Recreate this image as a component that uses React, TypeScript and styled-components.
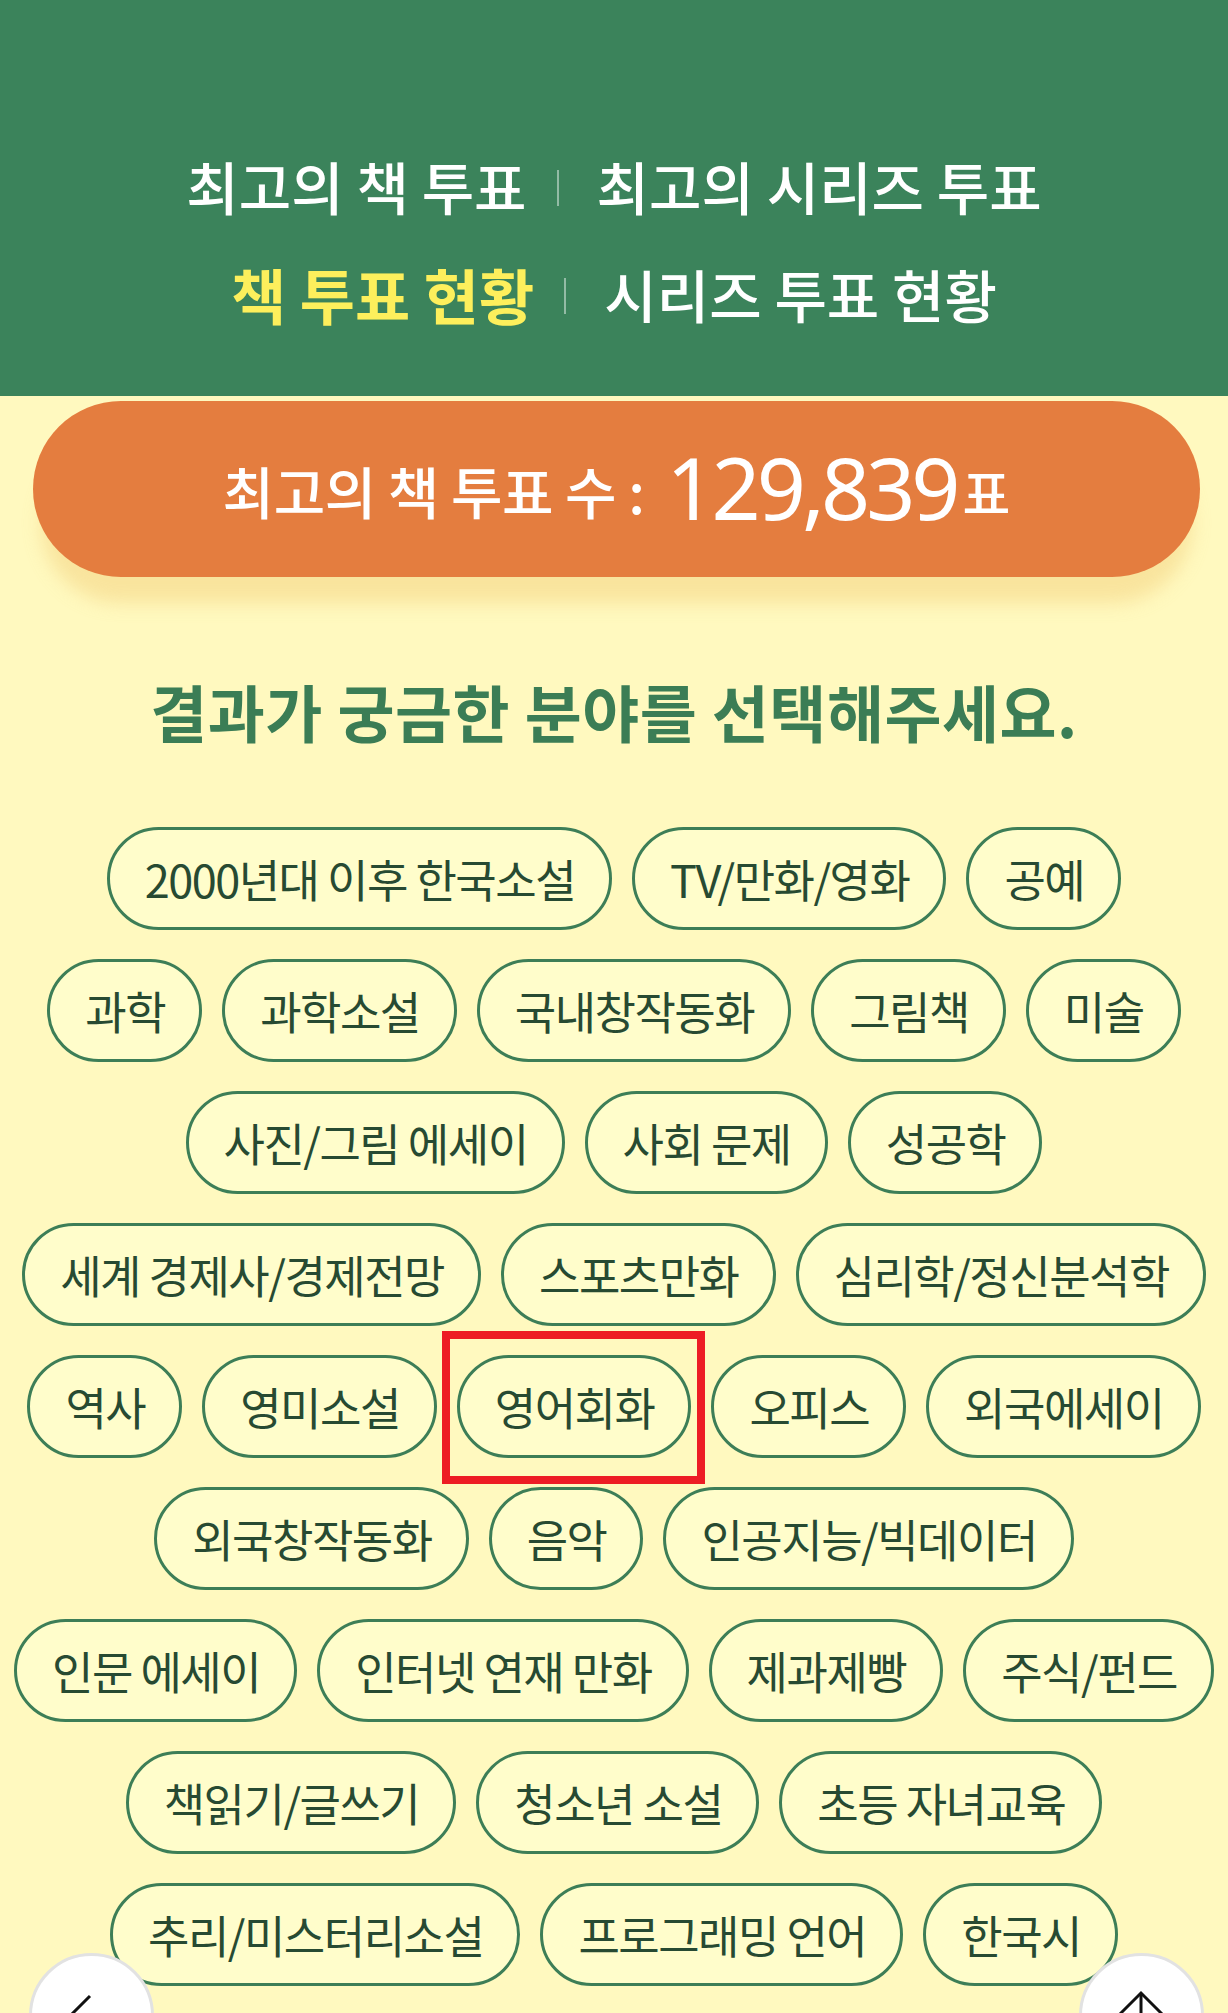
import React from "react";
import styled, { createGlobalStyle, css } from "styled-components";

const GlobalStyle = createGlobalStyle`
  html, body {
    margin: 0;
    padding: 0;
    background: #fff9bf;
  }
  body {
    font-family: "Noto Sans CJK KR", "Noto Sans", sans-serif;
  }
`;

const categoryRows: string[][] = [
  ["2000년대 이후 한국소설", "TV/만화/영화", "공예"],
  ["과학", "과학소설", "국내창작동화", "그림책", "미술"],
  ["사진/그림 에세이", "사회 문제", "성공학"],
  ["세계 경제사/경제전망", "스포츠만화", "심리학/정신분석학"],
  ["역사", "영미소설", "영어회화", "오피스", "외국에세이"],
  ["외국창작동화", "음악", "인공지능/빅데이터"],
  ["인문 에세이", "인터넷 연재 만화", "제과제빵", "주식/펀드"],
  ["책읽기/글쓰기", "청소년 소설", "초등 자녀교육"],
  ["추리/미스터리소설", "프로그래밍 언어", "한국시"],
];

const HIGHLIGHTED = "영어회화";

const App: React.FC = () => {
  return (
    <>
      <GlobalStyle />
      <Page>
        <Header>
          <NavLine>
            <NavItem>최고의 책 투표</NavItem>
            <Divider />
            <NavItem>최고의 시리즈 투표</NavItem>
          </NavLine>
          <NavLine>
            <NavItem $active>책 투표 현황</NavItem>
            <Divider />
            <NavItem>시리즈 투표 현황</NavItem>
          </NavLine>
        </Header>

        <CountPill>
          <CountLabel>최고의 책 투표 수 :</CountLabel>
          <CountNumber>129,839</CountNumber>
          <CountUnit>표</CountUnit>
        </CountPill>

        <Heading>결과가 궁금한 분야를 선택해주세요.</Heading>

        <ChipList>
          {categoryRows.map((row, i) => (
            <ChipRow key={i}>
              {row.map((name) => (
                <Chip key={name} $highlight={name === HIGHLIGHTED}>
                  {name}
                </Chip>
              ))}
            </ChipRow>
          ))}
        </ChipList>

        <FloatButton $side="left" aria-label="뒤로">
          <svg width="125" height="125" viewBox="0 0 125 125">
            <polyline
              points="61,43 37,67 61,91"
              fill="none"
              stroke="#111"
              strokeWidth="3"
            />
          </svg>
        </FloatButton>
        <FloatButton $side="right" aria-label="맨 위로">
          <svg width="125" height="125" viewBox="0 0 125 125">
            <polyline
              points="40,62 62,40 84,62"
              fill="none"
              stroke="#111"
              strokeWidth="3"
            />
            <line x1="62" y1="40" x2="62" y2="95" stroke="#111" strokeWidth="3" />
          </svg>
        </FloatButton>
      </Page>
    </>
  );
};

export default App;

const Page = styled.div`
  width: 1228px;
  min-height: 2013px;
  background: #fff9bf;
  overflow: hidden;
`;

const Header = styled.header`
  height: 396px;
  box-sizing: border-box;
  padding-top: 131px;
  background: #3b835b;
  display: flex;
  flex-direction: column;
  align-items: center;
`;

const NavLine = styled.div`
  display: flex;
  align-items: center;
  height: 108px;
`;

const NavItem = styled.span<{ $active?: boolean }>`
  font-size: 57px;
  letter-spacing: 0;
  font-weight: 500;
  color: #ffffff;
  white-space: nowrap;

  ${({ $active }) =>
    $active &&
    css`
      color: #fdef5c;
      font-size: 60px;
      font-weight: 700;
    `}
`;

const Divider = styled.span`
  display: block;
  width: 2px;
  height: 36px;
  margin: 6px 38px 0 30px;
  background: rgba(255, 255, 255, 0.45);
`;

const CountPill = styled.div`
  margin: 5px 28px 0 33px;
  height: 176px;
  border-radius: 88px;
  background: #e47d3f;
  box-shadow: 0 34px 18px -8px rgba(240, 200, 112, 0.42);
  display: flex;
  align-items: center;
  justify-content: center;
  color: #ffffff;
  white-space: nowrap;
`;

const CountLabel = styled.span`
  font-size: 56px;
  font-weight: 500;
  letter-spacing: -0.5px;
  margin-right: 22px;
`;

const CountNumber = styled.span`
  font-family: "Noto Sans", "Liberation Sans", sans-serif;
  font-size: 86px;
  font-weight: 400;
  letter-spacing: -4px;
  margin-top: -6px;
`;

const CountUnit = styled.span`
  font-size: 52px;
  font-weight: 500;
  margin-left: 6px;
  margin-top: 4px;
`;

const Heading = styled.h2`
  margin: 94px 0 0;
  text-align: center;
  font-size: 62px;
  font-weight: 700;
  letter-spacing: 0.5px;
  line-height: 80px;
  color: #3b7d55;
`;

const ChipList = styled.div`
  margin-top: 76px;
  display: flex;
  flex-direction: column;
  gap: 29px;
`;

const ChipRow = styled.div`
  display: flex;
  justify-content: center;
  gap: 20px;
`;

const Chip = styled.button<{ $highlight?: boolean }>`
  position: relative;
  box-sizing: border-box;
  height: 103px;
  padding: 0 34px 0 35px;
  border: 3px solid #3d7e57;
  border-radius: 52px;
  background: #fffdcb;
  color: #274a32;
  font-family: "Noto Sans CJK KR", "Noto Sans", sans-serif;
  font-size: 45px;
  font-weight: 400;
  letter-spacing: -1.5px;
  white-space: nowrap;
  cursor: pointer;
  display: flex;
  align-items: center;

  ${({ $highlight }) =>
    $highlight &&
    css`
      &::after {
        content: "";
        position: absolute;
        top: -27px;
        bottom: -29px;
        left: -18px;
        right: -17px;
        border: 8px solid #ed1c24;
        pointer-events: none;
      }
    `}
`;

const FloatButton = styled.button<{ $side: "left" | "right" }>`
  position: fixed;
  bottom: -65px;
  ${({ $side }) => ($side === "left" ? "left: 29px;" : "right: 24px;")}
  width: 125px;
  height: 125px;
  padding: 0;
  box-sizing: border-box;
  border-radius: 50%;
  border: 3px solid #e2e2e2;
  background: #ffffff;
  display: flex;
  align-items: center;
  justify-content: center;
  overflow: hidden;

  svg {
    display: block;
    flex-shrink: 0;
  }
`;
